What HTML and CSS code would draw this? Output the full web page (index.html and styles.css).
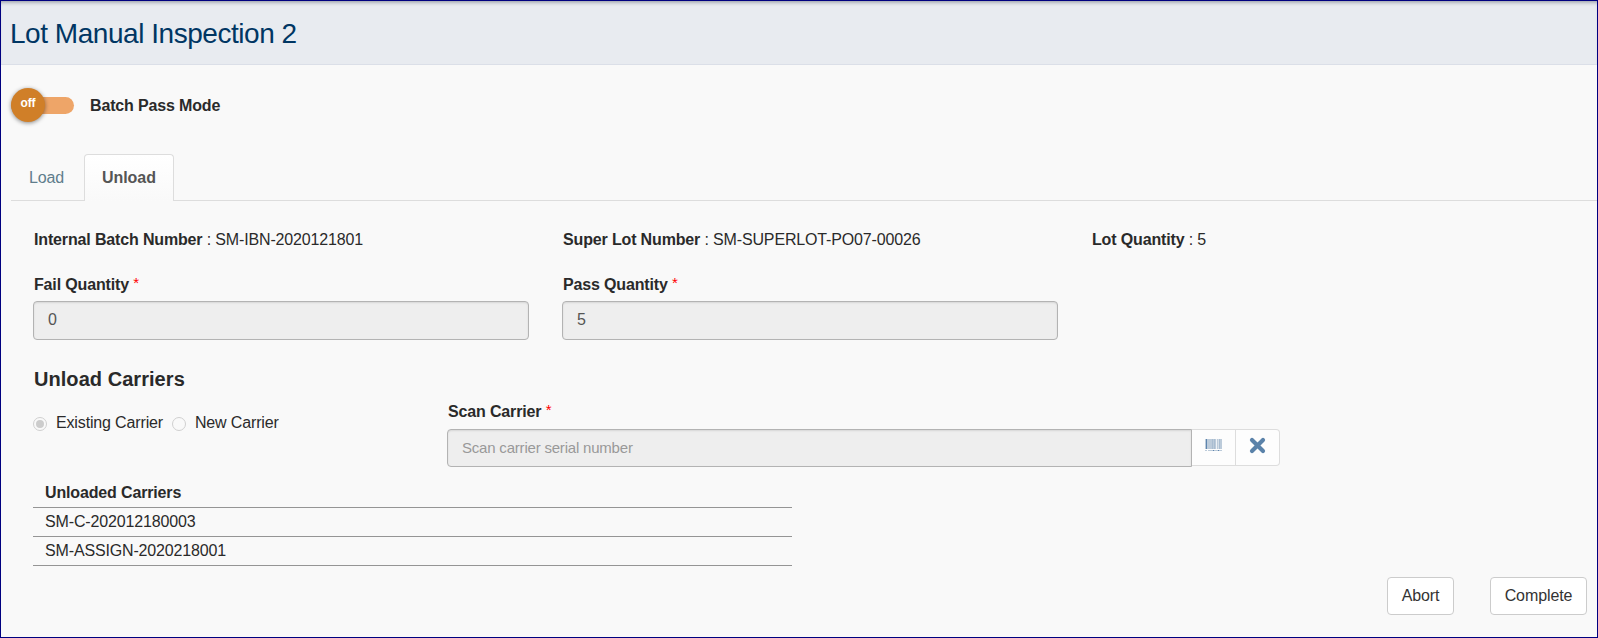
FILE: index.html
```html
<!DOCTYPE html>
<html lang="en">
<head>
<meta charset="utf-8">
<title>Lot Manual Inspection 2</title>
<link rel="stylesheet" href="styles.css">
</head>
<body>
<div class="page">
  <header class="header"><h1 class="title">Lot Manual Inspection 2</h1></header>
  <div class="mode">
    <div class="switch"><span class="knob">off</span></div>
    <span class="mode-label">Batch Pass Mode</span>
  </div>
  <nav class="tabs">
    <span class="tab">Load</span>
    <span class="tab active">Unload</span>
  </nav>
  <main class="panel">
    <div class="row info">
      <div><b>Internal Batch Number</b> : SM-IBN-2020121801</div>
      <div><b>Super Lot Number</b> : SM-SUPERLOT-PO07-00026</div>
      <div><b>Lot Quantity</b> : 5</div>
    </div>
    <div class="row">
      <div class="field">
        <label class="label" for="fail">Fail Quantity <span class="req">*</span></label>
        <input class="input" id="fail" value="0" disabled>
      </div>
      <div class="field">
        <label class="label" for="pass">Pass Quantity <span class="req">*</span></label>
        <input class="input" id="pass" value="5" disabled>
      </div>
    </div>
    <h2 class="subtitle">Unload Carriers</h2>
    <div class="carrier">
      <div class="radios">
        <span class="radio checked"></span><span class="radio-text first">Existing Carrier</span>
        <span class="radio"></span><span class="radio-text">New Carrier</span>
      </div>
      <div class="scan">
        <label class="label" for="scan">Scan Carrier <span class="req">*</span></label>
        <div class="group">
          <input class="input scan-input" id="scan" placeholder="Scan carrier serial number" disabled>
          <button class="addon" aria-label="Scan">
            <svg width="17" height="12" viewBox="0 0 17 12" shape-rendering="crispEdges">
              <path fill="#bccbda" d="M0 0h17v10H0z"/>
              <path fill="#5d84ad" d="M1 0h1v10H1z"/>
              <path fill="#a9bdd1" d="M7 0h1v10H7zM9 0h1v10H9zM14 0h1v10h-1z"/>
              <path fill="#eef2f6" d="M11 0h1v10h-1z"/>
              <path fill="#d5dfe8" d="M13 0h1v10h-1z"/>
              <path fill="#bccbda" d="M0 11h2v1H0zM3 11h14v1H3z"/>
              <path fill="#5d84ad" d="M8 11h1v1H8zM13 11h1v1h-1z"/>
            </svg>
          </button>
          <button class="addon last" aria-label="Clear">
            <svg width="17" height="17" viewBox="0 0 17 17"><path d="M3 3l11 11M14 3L3 14" stroke="#5a82a9" stroke-width="4.2" stroke-linecap="round"/></svg>
          </button>
        </div>
      </div>
    </div>
    <table class="table">
      <thead><tr><th>Unloaded Carriers</th></tr></thead>
      <tbody>
        <tr><td>SM-C-202012180003</td></tr>
        <tr><td>SM-ASSIGN-2020218001</td></tr>
      </tbody>
    </table>
  </main>
  <footer class="actions">
    <button class="btn abort">Abort</button>
    <button class="btn complete">Complete</button>
  </footer>
</div>
</body>
</html>
```
FILE: styles.css
```css
* { box-sizing: border-box; }
body {
  margin: 0;
  font: 16px/20px "Liberation Sans", Arial, sans-serif;
  letter-spacing: -.15px;
  color: #2a2a2a;
}
.page {
  width: 1598px;
  height: 638px;
  border: 1px solid #000080;
  background: #f9f9f9;
  overflow: hidden;
}
.header {
  height: 64px;
  padding: 15px 9px 0;
  background: #e8ebf0;
  border-bottom: 1px solid #dbdfe8;
  box-shadow: inset 0 4px 4px -3px #8a8f9a;
}
.title {
  margin: 0;
  font-size: 28px;
  line-height: 36px;
  font-weight: 400;
  letter-spacing: -.46px;
  color: #003663;
}
.mode {
  display: flex;
  align-items: center;
  height: 34px;
  margin: 23px 0 0 10px;
}
.switch {
  display: flex;
  align-items: center;
  width: 63px;
  height: 17px;
  background: #eea568;
  border-radius: 9px;
}
.knob {
  width: 34px;
  height: 34px;
  border-radius: 50%;
  background: #d07f28;
  box-shadow: 0 1px 4px rgba(0, 0, 0, .45);
  color: #fff;
  font-size: 12px;
  font-weight: 700;
  line-height: 30px;
  text-align: center;
}
.mode-label { margin-left: 16px; padding-top: 2px; font-weight: 700; }
.tabs {
  display: flex;
  height: 47px;
  margin: 32px 0 0 10px;
  border-bottom: 1px solid #ddd;
}
.tab {
  width: 73px;
  height: 47px;
  padding: 14px 0 0 18px;
  color: #5f7d8c;
}
.active {
  width: 90px;
  padding: 13px 0 0 17px;
  border: 1px solid #ddd;
  border-bottom: 0;
  border-radius: 4px 4px 0 0;
  background: linear-gradient(#fff, #f9f9f9);
  color: #555;
  font-weight: 700;
  letter-spacing: -.05px;
}
.panel { padding: 29px 0 0 32px; }
.row {
  display: grid;
  grid-template-columns: 496px 496px 1fr;
  column-gap: 33px;
}
.info { padding-left: 1px; margin-bottom: 25px; }
.label { display: block; padding-left: 1px; font-weight: 700; }
.req { color: #f00; font-size: 15px; font-weight: 400; line-height: 1; vertical-align: 2px; }
.input {
  display: block;
  width: 100%;
  height: 39px;
  margin: 6px 0 0;
  padding: 0 14px 2px;
  border: 1px solid #b3b3b3;
  border-radius: 4px;
  background: #eee;
  box-shadow: inset 0 1px 2px rgba(0, 0, 0, .1);
  color: #555;
  font: inherit;
}
.input::placeholder { color: #999; opacity: 1; }
.subtitle {
  margin: 27px 0 0 1px;
  font-size: 20px;
  line-height: 24px;
  letter-spacing: .05px;
}
.carrier { display: flex; height: 66px; margin-top: 10px; }
.radios {
  display: flex;
  align-items: center;
  width: 414px;
  height: 20px;
  margin-top: 12px;
}
.radio {
  width: 14px;
  height: 14px;
  margin-top: 2px;
  padding: 2px;
  border: 1px solid #d0d0d0;
  border-radius: 50%;
}
.checked::before {
  content: "";
  display: block;
  width: 8px;
  height: 8px;
  border-radius: 50%;
  background: #ccc;
}
.radio-text { margin-left: 9px; }
.first { margin-right: 9px; }
.scan { width: 833px; padding-top: 1px; }
.group { display: flex; margin-top: 7px; }
.scan-input {
  width: 745px;
  height: 38px;
  margin: 0;
  border-radius: 4px 0 0 4px;
  font-size: 15px;
  letter-spacing: -.2px;
}
.addon {
  display: flex;
  justify-content: center;
  width: 44px;
  height: 37px;
  margin: 0;
  padding: 9px 0 0;
  border: 1px solid #ddd;
  border-left: 0;
  background: #fdfdfd;
}
.addon svg { flex: none; }
.last { padding-top: 7px; border-radius: 0 4px 4px 0; }
.table { width: 759px; margin-top: 11px; border-collapse: collapse; }
.table th, .table td {
  height: 29px;
  padding: 0 12px;
  border-bottom: 1px solid #959595;
  text-align: left;
}
.table th { padding-top: 1px; }
.actions {
  display: flex;
  justify-content: flex-end;
  gap: 36px;
  margin: 11px 10px 0 0;
}
.btn {
  height: 38px;
  padding: 1px 0 0;
  border: 1px solid #ccc;
  border-radius: 4px;
  background: #fff;
  color: #333;
  font: inherit;
  letter-spacing: -.1px;
}
.abort { width: 67px; }
.complete { width: 97px; }
```
